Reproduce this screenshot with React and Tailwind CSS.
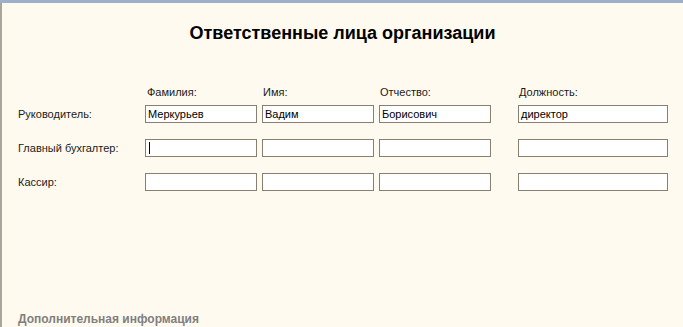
const rows = [
  { label: 'Руководитель:', values: ['Меркурьев', 'Вадим', 'Борисович', 'директор'] },
  { label: 'Главный бухгалтер:', values: ['', '', '', ''], caret: true },
  { label: 'Кассир:', values: ['', '', '', ''] },
]

function Field({ value, caret, wide }) {
  return (
    <div
      className={`h-[18px] ${wide ? 'w-[150px]' : 'w-[112px]'} border border-[#877f6f] bg-white flex items-center px-[2px] text-[11px] leading-none text-black`}
    >
      {caret && <span className="ml-[1px] h-[12px] w-px bg-black" />}
      {value}
    </div>
  )
}

export default function App() {
  return (
    <div className="h-[327px] w-[683px] overflow-hidden bg-[#fffaef] font-['Liberation_Sans',Arial,sans-serif]">
      <div className="h-[3px] bg-[#9cb0cc]" />
      <div className="flex h-[324px]">
        <div className="w-[2px] bg-[#a8a59c]" />
        <div className="flex flex-1 flex-col">
          <h1 className="mt-[20px] text-center text-[18px] font-bold leading-[20px] text-black">
            Ответственные лица организации
          </h1>

          <div className="ml-[16px] mt-[43px] flex flex-col gap-[16px]">
            <div className="-mb-[10px] flex text-[11px] leading-[13px] text-[#1a1a1a]">
              <div className="w-[128px]" />
              <div className="w-[117px] pl-px">Фамилия:</div>
              <div className="w-[117px]">Имя:</div>
              <div className="w-[139px]">Отчество:</div>
              <div>Должность:</div>
            </div>
            {rows.map((r) => (
              <div key={r.label} className="flex items-center">
                <div className="w-[127px] text-[11px] leading-[13px] text-[#1a1a1a]">{r.label}</div>
                <div className="flex">
                  <Field value={r.values[0]} caret={r.caret} />
                  <div className="ml-[5px]"><Field value={r.values[1]} /></div>
                  <div className="ml-[5px]"><Field value={r.values[2]} /></div>
                  <div className="ml-[27px]"><Field value={r.values[3]} wide /></div>
                </div>
              </div>
            ))}
          </div>

          <div className="ml-[16px] mt-auto mb-px text-[12px] font-bold leading-[13px] text-[#7f7f7f]">
            Дополнительная информация
          </div>
        </div>
      </div>
    </div>
  )
}
